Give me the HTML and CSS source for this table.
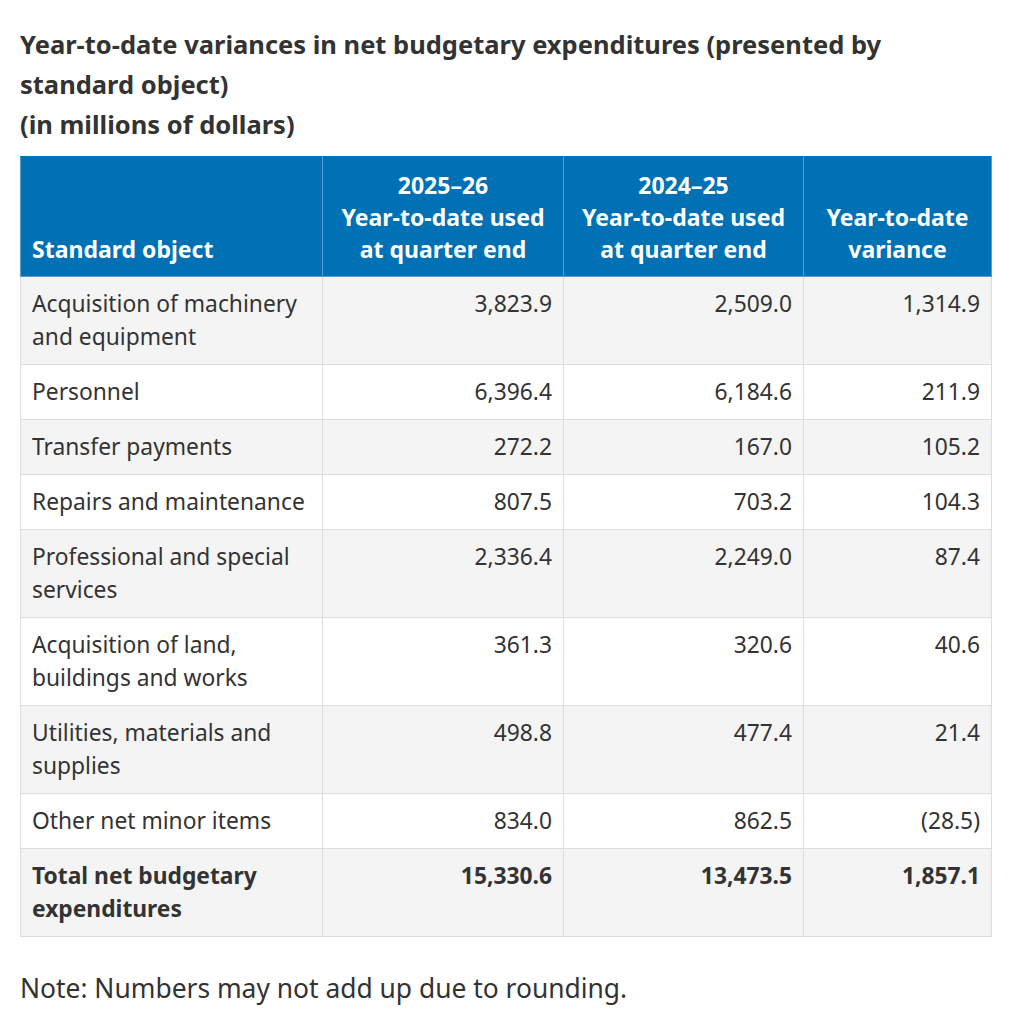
FILE: index.html
```html
<!DOCTYPE html>
<html lang="en">
<head>
<meta charset="utf-8">
<title>Year-to-date variances</title>
<link rel="stylesheet" href="styles.css">
</head>
<body>
<div class="page">
  <h2 class="caption">Year-to-date variances in net budgetary expenditures (presented by standard object)<br>(in millions of dollars)</h2>
  <table class="data">
    <thead>
      <tr>
        <th class="left">Standard object</th>
        <th>2025–26<br>Year-to-date used<br>at quarter end</th>
        <th>2024–25<br>Year-to-date used<br>at quarter end</th>
        <th>Year-to-date<br>variance</th>
      </tr>
    </thead>
    <tbody>
      <tr><td>Acquisition of machinery and equipment</td><td class="num">3,823.9</td><td class="num">2,509.0</td><td class="num">1,314.9</td></tr>
      <tr><td>Personnel</td><td class="num">6,396.4</td><td class="num">6,184.6</td><td class="num">211.9</td></tr>
      <tr><td>Transfer payments</td><td class="num">272.2</td><td class="num">167.0</td><td class="num">105.2</td></tr>
      <tr><td>Repairs and maintenance</td><td class="num">807.5</td><td class="num">703.2</td><td class="num">104.3</td></tr>
      <tr><td>Professional and special services</td><td class="num">2,336.4</td><td class="num">2,249.0</td><td class="num">87.4</td></tr>
      <tr><td>Acquisition of land, buildings and works</td><td class="num">361.3</td><td class="num">320.6</td><td class="num">40.6</td></tr>
      <tr><td>Utilities, materials and supplies</td><td class="num">498.8</td><td class="num">477.4</td><td class="num">21.4</td></tr>
      <tr><td>Other net minor items</td><td class="num">834.0</td><td class="num">862.5</td><td class="num">(28.5)</td></tr>
      <tr class="total"><td>Total net budgetary expenditures</td><td class="num">15,330.6</td><td class="num">13,473.5</td><td class="num">1,857.1</td></tr>
    </tbody>
  </table>
  <p class="note">Note: Numbers may not add up due to rounding.</p>
</div>
</body>
</html>
```
FILE: styles.css
```css
html, body {
  margin: 0;
  padding: 0;
  background: #ffffff;
}
body {
  font-family: "Noto Sans", "Open Sans", sans-serif;
  color: #333333;
}
.page {
  padding: 24px 29px 0 20px;
}
.caption {
  margin: 0 0 12px 0;
  font-size: 25.5px;
  line-height: 40px;
  font-weight: 700;
  color: #333333;
}
.data {
  width: 972px;
  border-collapse: collapse;
  table-layout: fixed;
}
.data th {
  background: #0071b5;
  color: #ffffff;
  font-weight: 700;
  font-size: 23px;
  line-height: 32px;
  padding: 11.5px 11px 11px 11px;
  text-align: center;
  vertical-align: bottom;
  border: 1px solid #5b9dd0;
  border-top-color: #0071b5;
}
.data th.left {
  text-align: left;
  width: 279px;
}
.data th:nth-child(2) { width: 218px; }
.data th:nth-child(3) { width: 217px; }
.data td {
  font-size: 22.8px;
  line-height: 33px;
  padding: 10.5px 11px;
  vertical-align: top;
  border: 1px solid #dddddd;
}
.data td.num {
  text-align: right;
}
.data tbody tr:nth-child(odd) td {
  background: #f4f4f4;
}
.data tbody tr:nth-child(even) td {
  background: #ffffff;
}
.data tr.total td {
  font-weight: 700;
}
.note {
  margin: 31px 0 0 0;
  font-size: 26.4px;
  line-height: 40px;
}
```
